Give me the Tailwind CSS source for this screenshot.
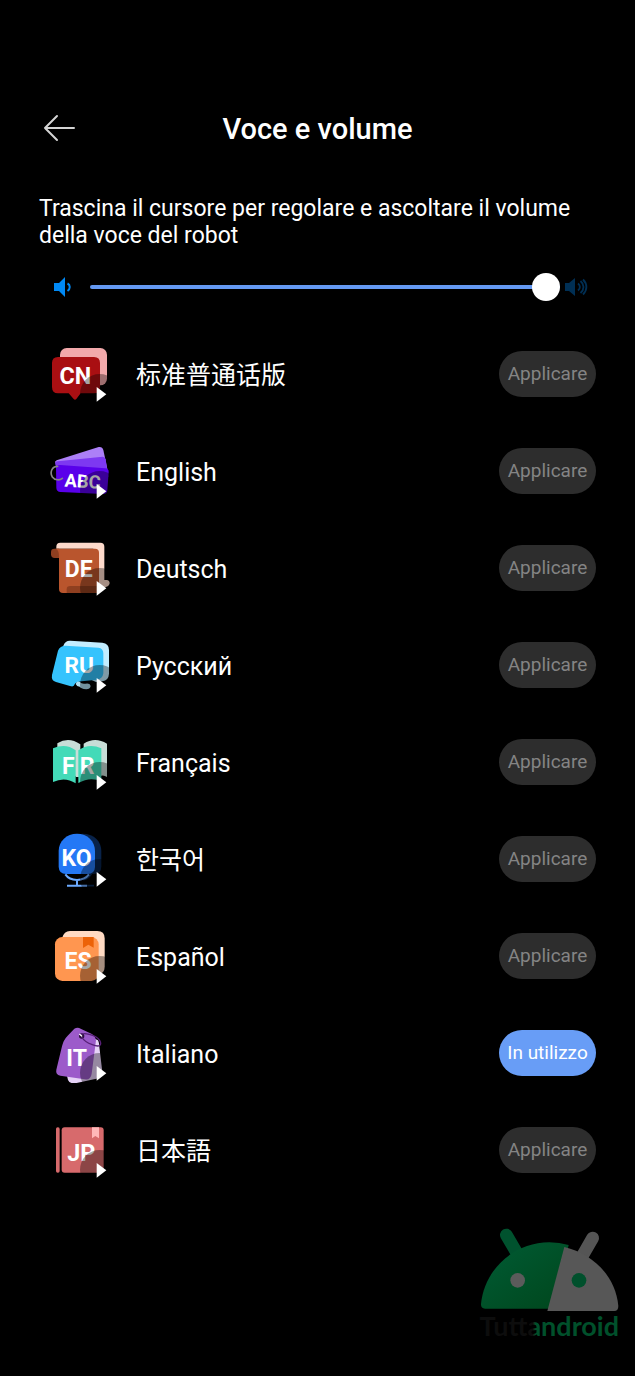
<!DOCTYPE html>
<html lang="it">
    <head>
        <title>Voce e volume</title>
        <meta charset="UTF-8">
        <meta name="viewport" content="width=device-width, initial-scale=1">
        <script src="https://cdn.jsdelivr.net/npm/@tailwindcss/browser@4"></script>
    </head>
    <body class="bg-black text-white min-h-screen font-[Roboto,'Noto_Sans_CJK_SC',sans-serif]">
        <!-- shared play badge -->
        <svg class="hidden" aria-hidden="true">
            <symbol id="play" viewBox="0 0 180 180">
                <circle cx="149" cy="149" r="59" fill="#000" fill-opacity=".35"/>
                <path d="M140 129 169 151 140 173Z" fill="#fff"/>
            </symbol>
        </svg>

        <header class="grid grid-cols-[1fr_auto_1fr] items-center px-10 pt-27">
            <button class="w-10 h-10 flex items-center" aria-label="Indietro">
                <svg class="w-10 h-10" viewBox="0 0 40 40" fill="none" stroke="#d4d4d4" stroke-width="2" stroke-linecap="round" stroke-linejoin="round"><path d="M34 19H5M17 7 5 19 17 31"/></svg>
            </button>
            <h1 class="text-[29px] leading-[42px] font-medium">Voce e volume</h1>
        </header>

        <main class="px-[39px] pt-[45px]">
            <label for="volume" class="block text-[23px] leading-[27px]">Trascina il cursore per regolare e ascoltare il volume della voce del robot</label>
            <div class="flex items-center mt-6 pl-[14px] pr-2">
                <svg class="w-5 h-6 shrink-0" viewBox="0 0 20 24" fill="none" stroke="#0089f5" stroke-width="2">
                    <path d="M1 8h5l6-6v20l-6-6H1z" fill="#0089f5" stroke="none"/>
                    <path d="M14.500 8.500c3 1.500 3 5.500 0 7.500"/>
                </svg>
                <input id="volume" type="range" min="0" max="100" value="100" class="flex-1 min-w-0 h-7 ml-[17px] appearance-none bg-transparent [&::-webkit-slider-runnable-track]:h-1 [&::-webkit-slider-runnable-track]:rounded-full [&::-webkit-slider-runnable-track]:bg-[#6499f2] [&::-webkit-slider-thumb]:appearance-none [&::-webkit-slider-thumb]:size-7 [&::-webkit-slider-thumb]:-mt-3 [&::-webkit-slider-thumb]:rounded-full [&::-webkit-slider-thumb]:bg-white">
                <svg class="w-6 h-6 ml-1 shrink-0" viewBox="0 0 24 24" fill="none" stroke="#002f54" stroke-width="1.800">
                    <path d="M1 8h4l6-5v18l-6-5H1z" fill="#002f54" stroke="none"/>
                    <path d="M14 8.500c2.500 2 2.500 5 0 7M16.500 6c4 3.500 4 8.500 0 12M19 4.500c4.500 4.500 4.500 10.500 0 15"/>
                </svg>
            </div>

            <ul class="flex flex-col gap-[37px] mt-[43px]">
                <li class="flex items-center pl-[11px]">
                    <svg class="w-15 h-15 shrink-0 font-bold" viewBox="30 27 180 180" aria-hidden="true">
                        <rect x="60" y="39" width="141" height="112" rx="20" fill="#f2a9ab"/>
                        <path d="M54 66H162Q180 66 180 84V156Q180 175 162 175H122L109 192Q105 196 101 192L86 175H54Q36 175 36 156V84Q36 66 54 66Z" fill="#a90f12"/>
                        <text x="106" y="147" font-size="70" text-anchor="middle" fill="#fff">CN</text>
                        <use href="#play" x="30" y="27" width="180" height="180"/>
                    </svg>
                    <span class="flex-1 ml-[26px] pt-[3px] text-[25px] leading-8">标准普通话版</span>
                    <button class="w-[97px] h-[46px] rounded-full bg-[#2d2d2d] text-[#848484] text-[19px]">Applicare</button>
                </li>
                <li class="flex items-center pl-[11px]">
                    <svg class="w-15 h-15 shrink-0 font-bold" viewBox="30 318 180 180" aria-hidden="true">
                        <path d="M46 384Q43 379 50 376L176 336Q187 334 190 345L202 402 66 415Z" fill="#ac7ff7"/>
                        <path d="M46 388Q44 380 53 379L188 365Q195 365 197 373L205 425 60 430Z" fill="#7d38f1"/>
                        <path d="M48 398Q48 389 60 390L196 400Q207 401 206 412L202 466Q201 478 188 477L62 471Q49 470 49 458Z" fill="#5900ea"/>
                        <path d="M53 394C35 394 29 413 37 426 45 437 60 436 67 430" fill="none" stroke="#858585" stroke-width="5" stroke-linecap="round"/>
                        <text x="128" y="458" font-size="55" text-anchor="middle" fill="#fff" transform="rotate(4 128 440)">ABC</text>
                        <use href="#play" x="30" y="318" width="180" height="180"/>
                    </svg>
                    <span class="flex-1 ml-[26px] pt-[3px] text-[25px] leading-8">English</span>
                    <button class="w-[97px] h-[46px] rounded-full bg-[#2d2d2d] text-[#848484] text-[19px]">Applicare</button>
                </li>
                <li class="flex items-center pl-[11px]">
                    <svg class="w-15 h-15 shrink-0 font-bold" viewBox="30 24 180 180" aria-hidden="true">
                        <path d="M49 56V50Q49 38 61 38H181Q193 38 193 50V150H200Q209 151 209 160 207 172 190 172H160V56Z" fill="#fddacb"/>
                        <path d="M57 56H43Q33 56 33 66V73Q33 84 44 84H57Z" fill="#8f3f20"/>
                        <path d="M46 56H165Q177 56 177 68V189H69Q57 189 57 177V78Q57 58 46 56Z" fill="#b9552d"/>
                        <path d="M80 189V178Q80 168 91 168H185V180Q183 189 171 189Z" fill="#8f3f20"/>
                        <text x="116" y="140" font-size="69" text-anchor="middle" fill="#fff">DE</text>
                        <use href="#play" x="30" y="24" width="180" height="180"/>
                    </svg>
                    <span class="flex-1 ml-[26px] pt-[3px] text-[25px] leading-8">Deutsch</span>
                    <button class="w-[97px] h-[46px] rounded-full bg-[#2d2d2d] text-[#848484] text-[19px]">Applicare</button>
                </li>
                <li class="flex items-center pl-[11px]">
                    <svg class="w-15 h-15 shrink-0 font-bold" viewBox="30 315 180 180" aria-hidden="true">
                        <path d="M70 347Q76 331 91 332L187 338Q207 340 207 360V431Q206 451 187 454L168 456 90 420Z" fill="#c3edff"/>
                        <path d="M54 362Q60 347 77 347L175 353Q190 355 190 370V430Q188 446 172 449L125 454Q106 456 104 463 102 472 90 468L48 456Q33 452 36 435Z" fill="#35c3fd"/>
                        <path d="M107 462Q110 452 120 456 124 463 137 461 150 459 152 468 150 478 139 478 121 475 119 470 110 470 107 462Z" fill="#b0dff1"/>
                        <text x="118" y="429" font-size="68" text-anchor="middle" fill="#fff">RU</text>
                        <use href="#play" x="30" y="315" width="180" height="180"/>
                    </svg>
                    <span class="flex-1 ml-[26px] pt-[3px] text-[25px] leading-8">Русский</span>
                    <button class="w-[97px] h-[46px] rounded-full bg-[#2d2d2d] text-[#848484] text-[19px]">Applicare</button>
                </li>
                <li class="flex items-center pl-[11px]">
                    <svg class="w-15 h-15 shrink-0 font-bold" viewBox="30 21 180 180" aria-hidden="true">
                        <path d="M52 55Q86 34 121 58V156H108L52 80ZM131 56Q165 34 201 56V156Q190 148 178 154L131 90Z" fill="#c8ddd7"/>
                        <path d="M39 70Q77 53 107 76V175Q75 154 39 171Z" fill="#43dab8"/>
                        <path d="M115 76Q147 53 184 70V169Q150 154 115 174Z" fill="#43dab8"/>
                        <text x="66" y="147" font-size="69" fill="#fff">F</text>
                        <text x="119" y="147" font-size="69" fill="#fff">R</text>
                        <use href="#play" x="30" y="21" width="180" height="180"/>
                    </svg>
                    <span class="flex-1 ml-[26px] pt-[3px] text-[25px] leading-8">Français</span>
                    <button class="w-[97px] h-[46px] rounded-full bg-[#2d2d2d] text-[#848484] text-[19px]">Applicare</button>
                </li>
                <li class="flex items-center pl-[11px]">
                    <svg class="w-15 h-15 shrink-0 font-bold" viewBox="30 312 180 180" aria-hidden="true">
                        <path d="M125 326C163 325 184 350 184 378V424Q184 447 161 447H120Z" fill="#09234a"/>
                        <g fill="none" stroke="#0b2b55" stroke-width="5"><path d="M155 445Q145 462 130 464M130 482H162"/></g>
                        <path d="M56 378C56 348 80 326 111 326S165 348 165 378V426Q164 447 143 447H78Q57 447 56 426Z" fill="#2478f5"/>
                        <path d="M76 448Q87 464 111 465 135 464 147 448M111 465V482M81 482H141" fill="none" stroke="#6caaff" stroke-width="6"/>
                        <text x="110" y="423" font-size="69" text-anchor="middle" fill="#fff">KO</text>
                        <use href="#play" x="30" y="312" width="180" height="180"/>
                    </svg>
                    <span class="flex-1 ml-[26px] pt-[3px] text-[25px] leading-8 font-[Roboto,'Noto_Sans_CJK_KR',sans-serif]">한국어</span>
                    <button class="w-[97px] h-[46px] rounded-full bg-[#2d2d2d] text-[#848484] text-[19px]">Applicare</button>
                </li>
                <li class="flex items-center pl-[11px]">
                    <svg class="w-15 h-15 shrink-0 font-bold" viewBox="30 18 180 180" aria-hidden="true">
                        <path d="M66 55Q72 33 90 33H172Q194 33 194 55V140Q194 160 174 164Z" fill="#ffdac3"/>
                        <rect x="45" y="51" width="131" height="132" rx="22" fill="#ff9650"/>
                        <path d="M129 51H161V83L145 74 129 84Z" fill="#ec6208"/>
                        <text x="114" y="146" font-size="69" text-anchor="middle" fill="#fff">ES</text>
                        <use href="#play" x="30" y="18" width="180" height="180"/>
                    </svg>
                    <span class="flex-1 ml-[26px] pt-[3px] text-[25px] leading-8">Español</span>
                    <button class="w-[97px] h-[46px] rounded-full bg-[#2d2d2d] text-[#848484] text-[19px]">Applicare</button>
                </li>
                <li class="flex items-center pl-[11px]">
                    <svg class="w-15 h-15 shrink-0 font-bold" viewBox="30 309 180 180" aria-hidden="true">
                        <path d="M152 352 173 360Q177 363 178 380L187 456Q188 470 176 475L105 490Q89 491 84 480L78 455Z" fill="#e6d2f7"/>
                        <path d="M103 326Q113 321 122 326L154 341Q166 347 168 361L155 461Q152 481 134 478L61 467Q46 464 49 449L66 379Q70 360 83 347Z" fill="#9c5bca"/>
                        <circle cx="125" cy="348" r="8" fill="#2b103c"/>
                        <path d="M121 346C127 336 167 343 179 361 187 376 178 383 157 374 140 368 129 358 125 351" fill="none" stroke="#582078" stroke-width="4"/>
                        <path d="M119 343l6 5" stroke="#fff" stroke-width="4" stroke-linecap="round"/>
                        <text x="110" y="438" font-size="69" text-anchor="middle" fill="#fff">IT</text>
                        <use href="#play" x="30" y="309" width="180" height="180"/>
                    </svg>
                    <span class="flex-1 ml-[26px] pt-[3px] text-[25px] leading-8">Italiano</span>
                    <button class="w-[97px] h-[46px] rounded-full bg-[#689df6] text-white text-[19px]">In utilizzo</button>
                </li>
                <li class="flex items-center pl-[11px]">
                    <svg class="w-15 h-15 shrink-0 font-bold" viewBox="30 15 180 180" aria-hidden="true">
                        <rect x="48" y="37" width="11" height="136" rx="5" fill="#d76a6c"/>
                        <rect x="65" y="37" width="126" height="136" rx="9" fill="#d76a6c"/>
                        <path d="M156 37H177V70L166 63 156 70Z" fill="#ffb8b9"/>
                        <text x="124" y="137" font-size="70" text-anchor="middle" fill="#fff">JP</text>
                        <use href="#play" x="30" y="15" width="180" height="180"/>
                    </svg>
                    <span class="flex-1 ml-[26px] pt-[3px] text-[25px] leading-8 font-[Roboto,'Noto_Sans_CJK_JP',sans-serif]">日本語</span>
                    <button class="w-[97px] h-[46px] rounded-full bg-[#2d2d2d] text-[#848484] text-[19px]">Applicare</button>
                </li>
            </ul>
        </main>

        <footer class="flex flex-col items-end pr-4 pt-12">
            <div class="flex flex-col items-center">
                <svg class="w-[139px] h-[84px]" viewBox="28 40 417 252" aria-hidden="true">
                    <defs>
                        <linearGradient id="green" x1="0" y1="0" x2="1" y2="1">
                            <stop offset="0" stop-color="#005c35"/>
                            <stop offset="1" stop-color="#00461c"/>
                        </linearGradient>
                    </defs>
                    <path d="M107 61 138 114" stroke="#00522e" stroke-width="38" stroke-linecap="round"/>
                    <path d="M366 70 336 122" stroke="#555" stroke-width="38" stroke-linecap="round"/>
                    <path d="M294 91 246 282H43Q30 281 31 268C41 166 126 84 236 83Q266 83 294 91Z" fill="url(#green)"/>
                    <path d="M281 97C366 117 435 184 443 274Q443 289 431 289H230Z" fill="#575757"/>
                    <circle cx="141" cy="197" r="22" fill="#5b5b5b"/>
                    <circle cx="325" cy="197" r="22" fill="#00502c"/>
                </svg>
                <p class="font-[Lato] font-bold text-[27px] leading-7 text-[#00502b]"><span class="text-[#0d0d0d]">Tutt</span><span class="bg-linear-to-r from-[#0d0d0d] from-40% to-[#00502b] to-60% bg-clip-text text-transparent">a</span>ndroid</p>
            </div>
        </footer>
    </body>
</html>
